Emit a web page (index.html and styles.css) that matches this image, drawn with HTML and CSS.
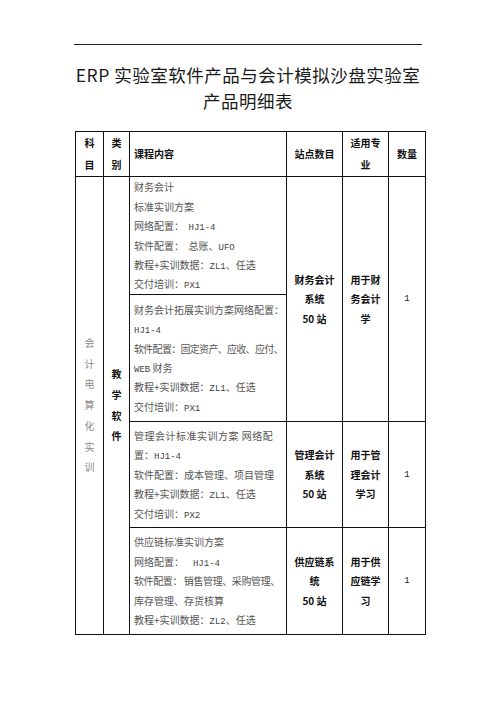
FILE: index.html
```html
<!DOCTYPE html>
<html lang="zh">
<head>
<meta charset="utf-8">
<link rel="stylesheet" href="styles.css">
</head>
<body>
<div class="page">
  <div class="rule"></div>
  <h1 class="title">ERP 实验室软件产品与会计模拟沙盘实验室<br>产品明细表</h1>
  <table class="grid">
    <colgroup>
      <col class="c1"><col class="c2"><col class="c3"><col class="c4"><col class="c5"><col class="c6">
    </colgroup>
    <tr class="head">
      <th>科<br>目</th>
      <th>类<br>别</th>
      <th class="left">课程内容</th>
      <th>站点数目</th>
      <th>适用专<br>业</th>
      <th>数量</th>
    </tr>
    <tr class="r1">
      <td rowspan="4" class="subject">会<br>计<br>电<br>算<br>化<br>实<br>训</td>
      <td rowspan="4" class="kind">教<br>学<br>软<br>件</td>
      <td class="content">财务会计<br>标准实训方案<br>网络配置：&nbsp; <span class="en">HJ1-4</span><br>软件配置：&nbsp; 总账、<span class="en">UFO</span><br>教程+实训数据：<span class="en">ZL1</span>、任选<br>交付培训：<span class="en">PX1</span></td>
      <td rowspan="2" class="strong">财务会计<br>系统<br>50 站</td>
      <td rowspan="2" class="strong">用于财<br>务会计<br>学</td>
      <td rowspan="2" class="num">1</td>
    </tr>
    <tr class="r2">
      <td class="content">财务会计拓展实训方案网络配置：<br><span class="en">HJ1-4</span><br><span class="tight">软件配置：固定资产、应收、应付、</span><br><span class="en">WEB</span> 财务<br>教程+实训数据：<span class="en">ZL1</span>、任选<br>交付培训：<span class="en">PX1</span></td>
    </tr>
    <tr class="r3">
      <td class="content"><span class="wide">管理会计标准实训方案 网络配</span><br>置：<span class="en">HJ1-4</span><br>软件配置：成本管理、项目管理<br>教程+实训数据：<span class="en">ZL1</span>、任选<br>交付培训：<span class="en">PX2</span></td>
      <td class="strong">管理会计<br>系统<br>50 站</td>
      <td class="strong">用于管<br>理会计<br>学习</td>
      <td class="num">1</td>
    </tr>
    <tr class="r4">
      <td class="content">供应链标准实训方案<br>网络配置：&nbsp;&nbsp;&nbsp; <span class="en">HJ1-4</span><br><span class="tight2">软件配置： 销售管理、采购管理、</span><br>库存管理、存货核算<br>教程+实训数据：<span class="en">ZL2</span>、任选</td>
      <td class="strong">供应链系<br>统<br>50 站</td>
      <td class="strong">用于供<br>应链学<br>习</td>
      <td class="num">1</td>
    </tr>
  </table>
</div>
</body>
</html>
```

FILE: styles.css
```css
html, body {
  margin: 0;
  padding: 0;
  background: #ffffff;
}

.page {
  width: 496px;
  padding-top: 44px;
  font-family: "Noto Sans CJK SC", "Noto Sans", sans-serif;
  color: #222;
}

.rule {
  margin-left: 74px;
  width: 348px;
  border-top: 1px solid #222;
}

.title {
  margin: 17px 0 0 0;
  text-align: center;
  font-size: 17.5px;
  font-weight: 400;
  line-height: 26px;
  color: #1a1a1a;
  letter-spacing: 0.5px;
}

.grid {
  margin: 17px 0 0 75px;
  border-collapse: collapse;
  table-layout: fixed;
  width: 350px;
}

.c1 { width: 28px; }
.c2 { width: 26px; }
.c3 { width: 157px; }
.c4 { width: 56px; }
.c5 { width: 46px; }
.c6 { width: 37px; }

.grid th,
.grid td {
  border: 1px solid #111;
  padding: 0;
  vertical-align: middle;
  text-align: center;
}

.head th {
  height: 44px;
  font-size: 10px;
  font-weight: 700;
  line-height: 22px;
  color: #111;
}

.head th.left {
  text-align: left;
  padding-left: 4px;
}

.r1 td { height: 117px; }
.r2 td { height: 126px; }
.r3 td { height: 105px; }
.r4 td { height: 106px; }

.grid td.content {
  text-align: left;
  padding: 0 0 0 4px;
  font-size: 10px;
  line-height: 19.4px;
  color: #555;
  white-space: nowrap;
}

.en {
  font-family: "Liberation Mono", monospace;
  font-size: 9px;
  line-height: 1;
  color: #444;
}

.wide { letter-spacing: 0.5px; }
.tight { letter-spacing: -0.7px; }
.tight2 { letter-spacing: -0.4px; }

.grid td.subject {
  font-size: 10px;
  line-height: 20.8px;
  color: #888;
}

.grid td.kind {
  font-size: 10px;
  font-weight: 700;
  line-height: 20.7px;
  color: #111;
}

.grid td.strong {
  font-size: 10px;
  font-weight: 700;
  line-height: 19.5px;
  color: #111;
}

.grid td.num {
  font-family: "Liberation Mono", monospace;
  font-size: 9px;
  color: #222;
}
```
